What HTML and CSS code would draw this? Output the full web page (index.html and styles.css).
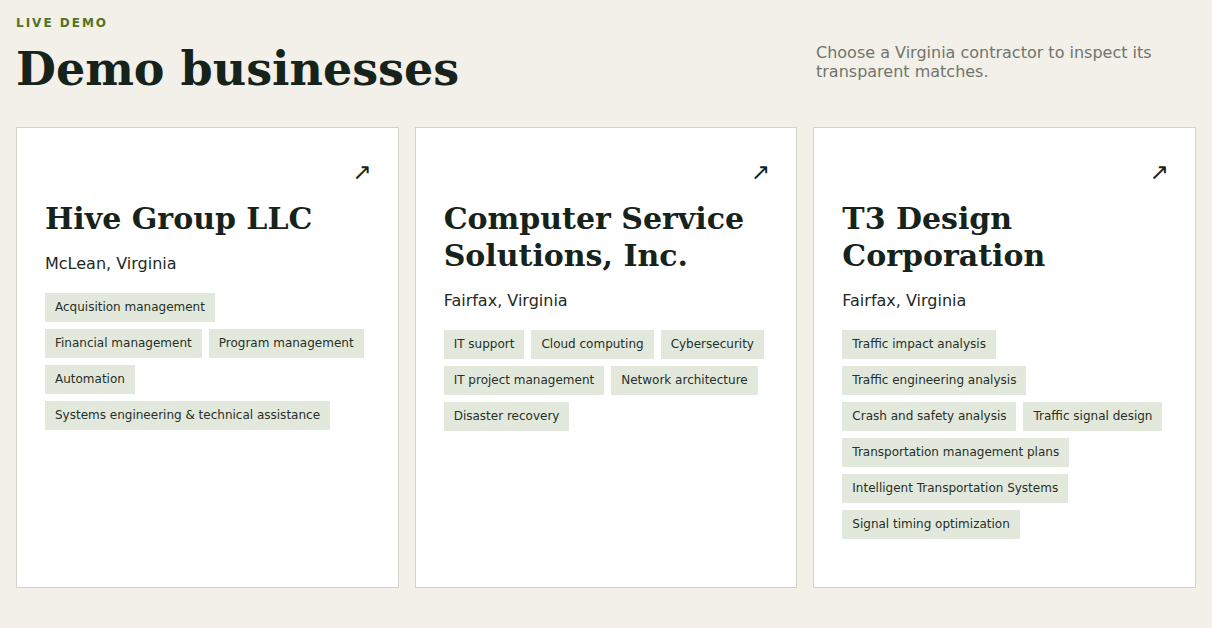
FILE: index.html
```html
<!DOCTYPE html>
<html lang="en">
<head>
    <meta charset="UTF-8">
    <meta name="viewport" content="width=device-width, initial-scale=1.0">
    <title>Demo businesses</title>
    <link rel="stylesheet" href="styles.css">
</head>
<body>
    <main class="page">
        <!-- Header -->
        <header class="page-header">
            <div class="heading-block">
                <div class="eyebrow">Live demo</div>
                <h1 class="page-title">Demo businesses</h1>
            </div>
            <p class="page-intro">Choose a Virginia contractor to inspect its transparent matches.</p>
        </header>

        <!-- Business cards -->
        <section class="card-grid">
            <a class="biz-card" href="#">
                <span class="card-arrow">↗</span>
                <h2 class="biz-name">Hive Group LLC</h2>
                <div class="biz-location">McLean, Virginia</div>
                <div class="tag-list">
                    <span class="tag">Acquisition management</span>
                    <span class="tag">Financial management</span>
                    <span class="tag">Program management</span>
                    <span class="tag">Automation</span>
                    <span class="tag">Systems engineering &amp; technical assistance</span>
                </div>
            </a>

            <a class="biz-card" href="#">
                <span class="card-arrow">↗</span>
                <h2 class="biz-name">Computer Service Solutions, Inc.</h2>
                <div class="biz-location">Fairfax, Virginia</div>
                <div class="tag-list">
                    <span class="tag">IT support</span>
                    <span class="tag">Cloud computing</span>
                    <span class="tag">Cybersecurity</span>
                    <span class="tag">IT project management</span>
                    <span class="tag">Network architecture</span>
                    <span class="tag">Disaster recovery</span>
                </div>
            </a>

            <a class="biz-card" href="#">
                <span class="card-arrow">↗</span>
                <h2 class="biz-name">T3 Design Corporation</h2>
                <div class="biz-location">Fairfax, Virginia</div>
                <div class="tag-list">
                    <span class="tag">Traffic impact analysis</span>
                    <span class="tag">Traffic engineering analysis</span>
                    <span class="tag">Crash and safety analysis</span>
                    <span class="tag">Traffic signal design</span>
                    <span class="tag">Transportation management plans</span>
                    <span class="tag">Intelligent Transportation Systems</span>
                    <span class="tag">Signal timing optimization</span>
                </div>
            </a>
        </section>
    </main>
</body>
</html>
```

FILE: styles.css
```css
body {
    font-family: 'DejaVu Sans', sans-serif;
    background-color: #f2f0e9;
    color: #17231c;
    margin: 0;
    padding: 0;
}

.page {
    padding: 16px;
}

.page-header {
    display: flex;
    justify-content: space-between;
    align-items: flex-start;
    margin-bottom: 31px;
}

.eyebrow {
    font-size: 12px;
    font-weight: bold;
    letter-spacing: 2px;
    text-transform: uppercase;
    color: #537321;
    margin-bottom: 13px;
}

.page-title {
    font-family: 'DejaVu Serif', serif;
    font-size: 46px;
    line-height: 1.15;
    font-weight: bold;
    margin: 0;
    color: #16231b;
}

.page-intro {
    width: 380px;
    margin: 27px 0 0;
    font-size: 16px;
    color: #70756d;
}

.card-grid {
    display: grid;
    grid-template-columns: repeat(3, 1fr);
    gap: 16px;
}

.biz-card {
    display: flex;
    flex-direction: column;
    min-height: 405px;
    padding: 28px 28px 26px;
    background-color: #fff;
    border: 1px solid #d2d3cb;
    color: inherit;
    text-decoration: none;
}

.card-arrow {
    align-self: flex-end;
    font-size: 23px;
    line-height: 26px;
    margin: 3px -2px 0 0;
}

.biz-name {
    font-family: 'DejaVu Serif', serif;
    font-size: 30px;
    line-height: 37px;
    font-weight: bold;
    margin: 15px 0 17px;
    color: #16231b;
}

.biz-location {
    font-size: 16px;
    color: #1f2a23;
    margin-bottom: 20px;
}

.tag-list {
    display: flex;
    flex-wrap: wrap;
    gap: 7px;
}

.tag {
    font-size: 12px;
    line-height: 15px;
    padding: 7px 10px;
    background-color: #e3e8dd;
    color: #253027;
}
```
